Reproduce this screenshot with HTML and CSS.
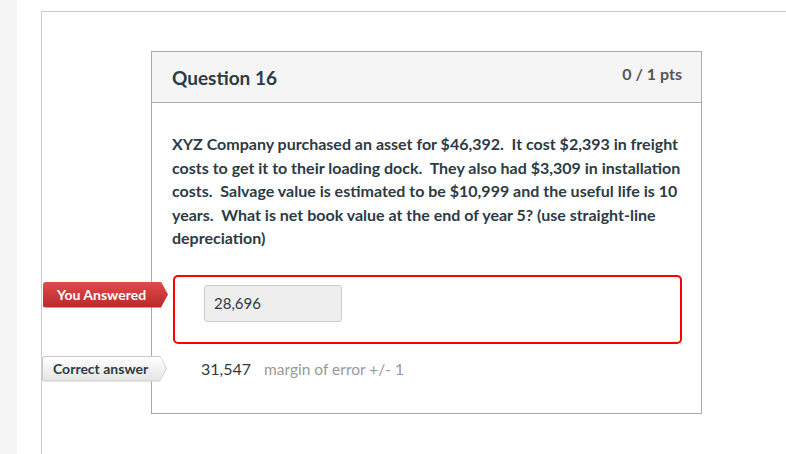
FILE: index.html
```html
<!DOCTYPE html>
<html>
<head>
<meta charset="utf-8">
<link rel="stylesheet" href="styles.css">
</head>
<body>
<div class="sidebar"></div>
<div class="main">
  <div class="outer">
    <div class="card">
      <div class="card-header">
        <h2 class="q-title">Question 16</h2>
        <div class="q-points">0 / 1 pts</div>
      </div>
      <div class="card-body">
        <p class="q-text">XYZ Company purchased an asset for $46,392.&nbsp; It cost $2,393 in freight costs to get it to their loading dock.&nbsp; They also had $3,309 in installation costs.&nbsp; Salvage value is estimated to be $10,999 and the useful life is 10 years.&nbsp; What is net book value at the end of year 5? (use straight-line depreciation)</p>
        <div class="answers">
          <div class="answer answer-wrong">
            <div class="tag tag-wrong">You Answered</div>
            <div class="answer-input">28,696</div>
          </div>
          <div class="answer answer-correct">
            <div class="tag tag-correct"><div class="tag-inner">Correct answer</div></div>
            <span class="answer-value">31,547</span>
            <span class="answer-margin">margin of error +/- 1</span>
          </div>
        </div>
      </div>
    </div>
  </div>
</div>
</body>
</html>
```
FILE: styles.css
```css
html, body {
  margin: 0;
  padding: 0;
  background: #fff;
}
body {
  display: flex;
  height: 454px;
  overflow: hidden;
  font-family: Lato, "Open Sans", "Liberation Sans", sans-serif;
  color: #2d3b45;
}
.sidebar {
  width: 17px;
  flex: none;
  background: #f5f5f5;
}
.main {
  flex: 1;
  padding: 11px 0 0 24px;
  display: flex;
}
.outer {
  flex: 1;
  border-top: 1px solid #c7cdd1;
  border-left: 1px solid #c7cdd1;
  padding: 39px 0 0 109px;
}
.card {
  width: 549px;
  border: 1px solid #aaaaaa;
  height: 361px;
}
.card-header {
  height: 50px;
  background: #f5f5f5;
  border-bottom: 1px solid #aaaaaa;
  display: flex;
  justify-content: space-between;
  align-items: flex-start;
  padding: 0 19px 0 20px;
}
.q-title {
  margin: 14px 0 0 0;
  font-size: 19px;
  font-weight: 700;
  line-height: 23px;
  color: #2d3b45;
}
.q-points {
  margin-top: 12px;
  font-size: 16px;
  font-weight: 700;
  line-height: 20px;
  color: #555555;
}
.card-body {
  padding: 29px 19px 0 20px;
}
.q-text {
  margin: 0;
  font-size: 16px;
  font-weight: 700;
  line-height: 23.5px;
  color: #2d3b45;
}
.answers {
  margin-top: 25px;
}
.answer {
  position: relative;
}
.answer-wrong {
  border: 2px solid #ff0000;
  border-radius: 5px;
  height: 37px;
  padding: 8px 0 20px 29px;
  margin-left: 1px;
}
.answer-input {
  width: 127px;
  height: 35px;
  background: #eeeeee;
  border: 1px solid #cccccc;
  border-radius: 3px;
  font-size: 15px;
  line-height: 35px;
  padding-left: 9px;
  color: #2d3b45;
}
.tag {
  position: absolute;
  height: 26px;
  font-size: 14px;
  font-weight: 700;
  line-height: 26px;
  clip-path: polygon(0 0, calc(100% - 7px) 0, 100% 50%, calc(100% - 7px) 100%, 0 100%);
}
.tag-wrong {
  left: -132px;
  top: 5px;
  width: 125px;
  text-align: center;
  text-indent: -8px;
  color: #fff;
  background: linear-gradient(#e14b4a, #b7292a);
  border-radius: 3px 0 0 3px;
}
.answer-correct {
  margin-top: 10px;
  height: 30px;
  display: flex;
  align-items: center;
  padding-left: 29px;
}
.tag-correct {
  left: -130px;
  top: 2px;
  width: 125px;
  background: #c9c9c9;
  border-radius: 3px 0 0 3px;
}
.tag-inner {
  position: absolute;
  inset: 1px;
  clip-path: polygon(0 0, calc(100% - 6px) 0, 100% 50%, calc(100% - 6px) 100%, 0 100%);
  background: linear-gradient(#ffffff, #e4e4e4);
  color: #2d3b45;
  line-height: 24px;
  text-indent: 10px;
  border-radius: 2px 0 0 2px;
}
.answer-value {
  font-size: 16px;
  color: #2d3b45;
}
.answer-margin {
  margin-left: 13px;
  font-size: 15.5px;
  color: #999999;
}
```
